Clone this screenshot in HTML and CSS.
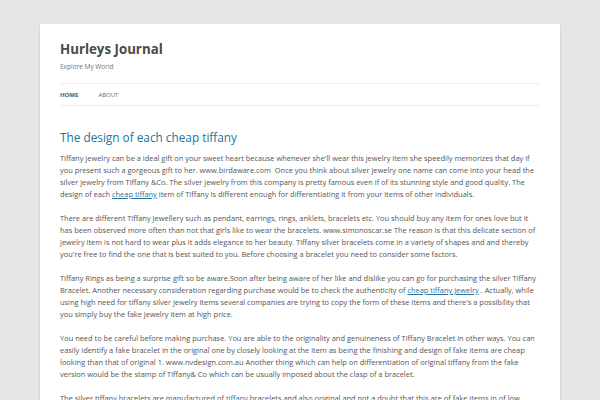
FILE: index.html
```html
<!DOCTYPE html>
<html>
<head>
<meta charset="utf-8">
<link rel="stylesheet" href="styles.css">
</head>
<body>
<div class="site">
  <header class="site-header">
    <h1 class="site-title">Hurleys Journal</h1>
    <h2 class="site-description">Explore My World</h2>
    <nav class="main-nav">
      <a class="current" href="#">Home</a>
      <a href="#">About</a>
    </nav>
  </header>
  <main class="site-content">
    <article class="entry">
      <h1 class="entry-title">The design of each cheap tiffany</h1>
      <div class="entry-content">
        <p>Tiffany jewelry can be a ideal gift on your sweet heart because whenever she'll wear this jewelry item she speedily memorizes that day if you present such a gorgeous gift to her. www.birdaware.com &nbsp;Once you think about silver jewelry one name can come into your head the silver jewelry from Tiffany &amp;Co. The silver jewelry from this company is pretty famous even if of its stunning style and good quality. The design of each <a href="#">cheap tiffany</a> item of Tiffany is different enough for differentiating it from your items of other individuals.</p>
        <p>There are different Tiffany Jewellery such as pendant, earrings, rings, anklets, bracelets etc. You should buy any item for ones love but it has been observed more often than not that girls like to wear the bracelets. www.simonoscar.se The reason is that this delicate section of jewelry item is not hard to wear plus it adds elegance to her beauty. Tiffany silver bracelets come in a variety of shapes and and thereby you're free to find the one that is best suited to you. Before choosing a bracelet you need to consider some factors.</p>
        <p>Tiffany Rings as being a surprise gift so be aware.Soon after being aware of her like and dislike you can go for purchasing the silver Tiffany Bracelet. Another necessary consideration regarding purchase would be to check the authenticity of <a href="#">cheap tiffany jewelry</a> . Actually, while using high need for tiffany silver jewelry items several companies are trying to copy the form of these items and there's a possibility that you simply buy the fake jewelry item at high price.</p>
        <p>You need to be careful before making purchase. You are able to the originality and genuineness of Tiffany Bracelet in other ways. You can easily identify a fake bracelet in the original one by closely looking at the item as being the finishing and design of fake items are cheap looking than that of original 1. www.nvdesign.com.au Another thing which can help on differentiation of original tiffany from the fake version would be the stamp of Tiffany&amp; Co which can be usually imposed about the clasp of a bracelet.</p>
        <p>The silver tiffany bracelets are manufactured of <a href="#">tiffany</a> bracelets and also original and not a doubt that this are of fake items in of low quality. You can to look at the stamp and the design of each item of Tiffany.</p>
      </div>
    </article>
  </main>
</div>
</body>
</html>
```
FILE: styles.css
```css
html, body {
  margin: 0;
  padding: 0;
}
body {
  background: #e6e6e6;
  font-family: "Open Sans", "Liberation Sans", sans-serif;
  color: #444;
  height: 400px;
  overflow: hidden;
}
.site {
  margin: 24px 40px 0;
  padding: 0 20px;
  background: #fff;
  min-height: 400px;
  box-shadow: 0 1px 2px rgba(100, 100, 100, 0.3);
}
.site-header {
  padding-top: 12px;
}
.site-title {
  margin: 0;
  padding-top: 3px;
  font-size: 13.3px;
  line-height: 20px;
  font-weight: 700;
  color: #4a4a4a;
}
.site-description {
  margin: 2px 0 0;
  font-size: 6.5px;
  line-height: 12px;
  font-weight: 400;
  color: #757575;
}
.main-nav {
  margin-top: 10px;
  border-top: 1px solid #ededed;
  border-bottom: 1px solid #ededed;
  display: flex;
  gap: 20px;
  height: 21px;
  align-items: center;
}
.main-nav a {
  font-size: 6px;
  text-transform: uppercase;
  text-decoration: none;
  color: #6a6a6a;
}
.main-nav a.current {
  font-weight: 700;
  color: #555;
}
.site-content {
  padding-top: 23px;
}
.entry-title {
  margin: 0 0 7px;
  font-size: 11.8px;
  line-height: 16px;
  font-weight: 400;
  color: #21759b;
}
.entry-content {
  font-size: 7.45px;
  line-height: 12px;
  color: #555;
}
.entry-content p {
  margin: 0 0 12px;
}
.entry-content a {
  color: #21759b;
}
```
